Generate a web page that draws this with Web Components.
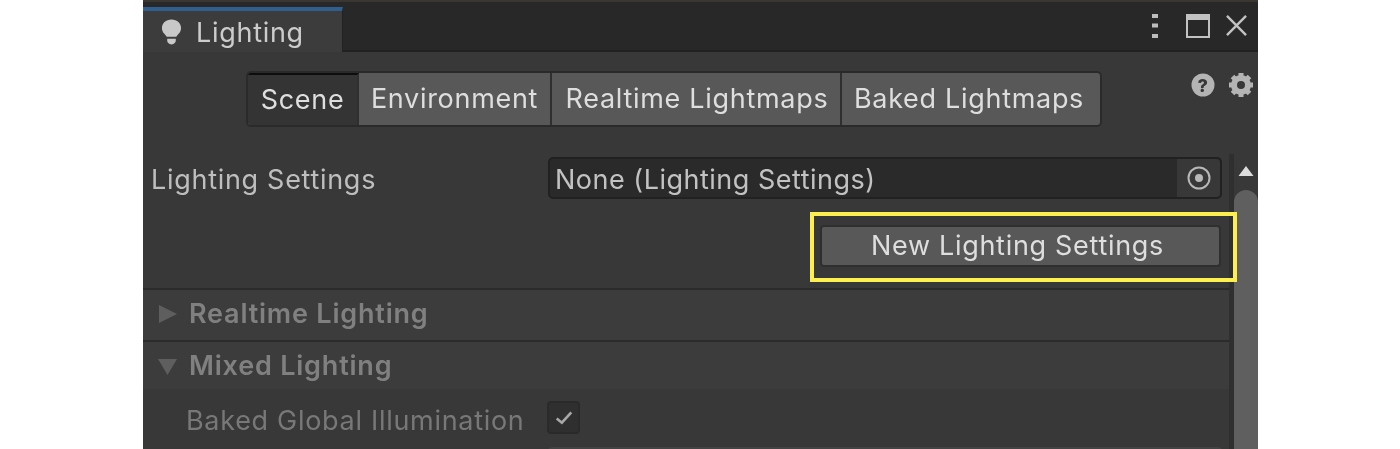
<!DOCTYPE html>
<html lang="en">
<head>
<meta charset="UTF-8">
<title>Lighting</title>
<style>
    html, body { margin: 0; background: #fff; }
    body { font-family: Inter, "Noto Sans", sans-serif; height: 449px; overflow: hidden; }
</style>
</head>
<body>
<lighting-window></lighting-window>

<script>
    const FONT = `font-family: Inter, "Noto Sans", sans-serif; font-size: 27px; letter-spacing: 0.7px;`;

    class ToolbarTabs extends HTMLElement {
        constructor() {
            super();
            this.attachShadow({ mode: 'open' });
            this.shadowRoot.innerHTML = `
                <style>
                    :host { display: flex; width: 856px; height: 56px; box-sizing: border-box; border: 2px solid #2a2a2a; border-radius: 5px; overflow: hidden; background: #585858; ${FONT} color: #dedede; }
                    div { display: flex; align-items: center; justify-content: center; box-sizing: border-box; border-right: 2px solid #2f2f2f; padding-bottom: 1px; white-space: nowrap; }
                    div:last-child { border-right: 0; }
                    .on { background: #343434; border-top: 2px solid #0d0d0d; }
                </style>
                <div class="on" style="width:111px">Scene</div>
                <div style="width:193px">Environment</div>
                <div style="width:290px;padding-left:2px">Realtime Lightmaps</div>
                <div style="flex:1;padding-right:4px">Baked Lightmaps</div>
            `;
        }
    }
    customElements.define('toolbar-tabs', ToolbarTabs);

    class FoldHeader extends HTMLElement {
        constructor() {
            super();
            this.attachShadow({ mode: 'open' });
            const open = this.hasAttribute('open');
            this.shadowRoot.innerHTML = `
                <style>
                    :host { display: flex; align-items: center; box-sizing: border-box; height: ${open ? 49 : 52}px; padding: 0 0 ${open ? 0 : 3}px 15px; background: #3c3c3c; border-top: 2px solid #2b2b2b; color: #808080; ${FONT} letter-spacing: 0.8px; font-weight: 600; }
                    svg { width: 20px; height: 20px; margin-right: 11px; flex: none; }
                </style>
                <svg viewBox="0 0 20 20"><path fill="#5e5e5e" d="${open ? 'M0 3H19L9.500 19Z' : 'M1 1L19 10L1 19Z'}"/></svg>
                <slot></slot>
            `;
        }
    }
    customElements.define('fold-header', FoldHeader);

    class HighlightBox extends HTMLElement {
        constructor() {
            super();
            this.attachShadow({ mode: 'open' });
            this.shadowRoot.innerHTML = `
                <style>
                    :host { display: block; position: relative; }
                    .mark { position: absolute; left: -10px; right: -16px; top: -13px; bottom: -15px; border: 4px solid #fdef50; pointer-events: none; }
                </style>
                <slot></slot>
                <div class="mark"></div>
            `;
        }
    }
    customElements.define('highlight-box', HighlightBox);

    class LightingWindow extends HTMLElement {
        constructor() {
            super();
            this.attachShadow({ mode: 'open' });
            this.shadowRoot.innerHTML = `
                <style>
                    :host { display: flex; flex-direction: column; width: 1115px; height: 449px; margin-left: 143px; overflow: hidden; background: #383838; ${FONT} color: #bebebe; border-top: 2px solid #3a3632; box-sizing: border-box; filter: blur(0.5px); }
                    .tabbar { display: flex; justify-content: space-between; height: 50px; flex: none; box-sizing: border-box; padding-top: 5px; background: #282828; border-bottom: 2px solid #212121; }
                    .tab { display: flex; align-items: center; box-sizing: border-box; width: 200px; margin-bottom: -2px; padding: 1px 0 0 18px; gap: 14px; background: #3c3c3c; border-top: 4px solid #2f5f8f; border-right: 1px solid #222; color: #cccccc; }
                    .winbtns { display: flex; align-items: center; gap: 20px; padding: 0 11px 1px 0; margin-top: -5px; }
                    .toolbar { display: flex; height: 56px; flex: none; margin-top: 19px; padding-left: 103px; position: relative; }
                    .helpers { display: flex; gap: 14px; margin: 2px 0 0 89px; align-items: flex-start; }
                    .content { display: flex; flex: 1; margin-top: 30px; min-height: 0; }
                    .main { flex: 1; min-width: 0; }
                    .row { display: flex; height: 42px; align-items: center; padding-right: 7px; }
                    .label { width: 405px; padding-left: 8px; box-sizing: border-box; flex: none; padding-top: 2px; white-space: nowrap; }
                    .field { flex: 1; display: flex; height: 42px; box-sizing: border-box; align-items: center; justify-content: space-between; background: #2a2a2a; border: 2px solid #212121; border-radius: 5px; padding-left: 5px; color: #c2c2c2; }
                    .field span { padding-top: 2px; letter-spacing: 0.5px; }
                    .picker { display: flex; align-items: center; justify-content: center; width: 43px; height: 38px; background: #383838; border-radius: 0 4px 4px 0; }
                    .action { margin: 26px 8px 21px 677px; }
                    .btn { display: flex; align-items: center; justify-content: center; height: 42px; box-sizing: border-box; background: #585858; border: 2px solid #2f2f2f; border-radius: 4px; color: #dedede; padding: 0 6px 1px 0; }
                    .sub { height: 58px; padding-right: 7px; display: flex; align-items: center; color: #787878; }
                    .sub .label { padding-left: 43px; padding-top: 4px; }
                    .check { width: 33px; height: 33px; box-sizing: border-box; background: #2f2f2f; border: 2px solid #2a2a2a; border-radius: 4px; display: flex; align-items: center; justify-content: center; margin-left: -1px; margin-top: -1px; }
                    .next { height: 10px; margin: 0 7px 0 405px; background: #444444; border-radius: 4px 4px 0 0; }
                    .scroll { width: 29px; flex: none; box-sizing: border-box; border-left: 5px solid #2f2f2f; display: flex; flex-direction: column; align-items: center; background: #383838; margin-top: -3px; }
                    .arrow { margin-top: 12px; }
                    .thumb { width: 24px; flex: 1; margin-top: 14px; background: #5f5f5f; border-radius: 12px 12px 0 0; }
                </style>
                <div class="tabbar">
                    <div class="tab">
                        <svg width="21" height="28" viewBox="0 0 22 28"><path fill="#c8c8c8" d="M11 1C5 1 1 5 1 10C1 14 4 16 6 19H16C18 16 21 14 21 10C21 5 17 1 11 1ZM6.500 21H15.500V23C15.500 25 14 27 11 27C8 27 6.500 25 6.500 23Z"/></svg>
                        <span>Lighting</span>
                    </div>
                    <div class="winbtns">
                        <svg width="8" height="24" viewBox="0 0 8 24" style="margin-right:1px"><path fill="#bdbdbd" d="M1 0H7V4H1ZM1 9.500H7V13.500H1ZM1 20H7V24H1Z"/></svg>
                        <svg width="24" height="24" viewBox="0 0 24 24" style="margin-left:6px"><path fill="#c2c2c2" d="M0 0H24V24H0ZM2 6V22H22V6Z" fill-rule="evenodd"/></svg>
                        <svg width="21" height="21" viewBox="0 0 22 22" style="margin-left:-4px"><path stroke="#c2c2c2" stroke-width="2.500" d="M1 1L21 21M21 1L1 21"/></svg>
                    </div>
                </div>
                <div class="toolbar">
                    <toolbar-tabs></toolbar-tabs>
                    <div class="helpers">
                        <svg width="24" height="24" viewBox="0 0 24 24"><circle cx="12" cy="12" r="11.500" fill="#b4b4b4"/><text x="12" y="19" text-anchor="middle" font-family="Inter" font-weight="800" font-size="18" fill="#383838">?</text></svg>
                        <svg width="24" height="24" viewBox="0 0 24 24"><circle cx="12" cy="12" r="7" fill="none" stroke="#b4b4b4" stroke-width="6"/><path stroke="#b4b4b4" stroke-width="5" d="M12 0V5M12 19V24M0 12H5M19 12H24M3.500 3.500L7 7M17 17L20.500 20.500M20.500 3.500L17 7M7 17L3.500 20.500"/></svg>
                    </div>
                </div>
                <div class="content">
                    <div class="main">
                        <div class="row">
                            <div class="label">Lighting Settings</div>
                            <div class="field">
                                <span>None (Lighting Settings)</span>
                                <div class="picker"><svg width="24" height="24" viewBox="0 0 24 24"><circle cx="12" cy="12" r="10.500" fill="none" stroke="#b8b8b8" stroke-width="2"/><circle cx="12" cy="12" r="4" fill="#b8b8b8"/></svg></div>
                            </div>
                        </div>
                        <highlight-box class="action"><div class="btn">New Lighting Settings</div></highlight-box>
                        <fold-header>Realtime Lighting</fold-header>
                        <fold-header open>Mixed Lighting</fold-header>
                        <div class="sub">
                            <div class="label">Baked Global Illumination</div>
                            <div class="check"><svg width="18" height="16" viewBox="0 0 21 17"><path fill="none" stroke="#a8a8a8" stroke-width="3" d="M2 9L8 14L19 2"/></svg></div>
                        </div>
                        <div class="next"></div>
                    </div>
                    <div class="scroll">
                        <svg class="arrow" width="18" height="10" viewBox="0 0 18 12"><path fill="#dcdcdc" d="M9 0L18 12H0Z"/></svg>
                        <div class="thumb"></div>
                    </div>
                </div>
            `;
        }
    }
    customElements.define('lighting-window', LightingWindow);
</script>
</body>
</html>
